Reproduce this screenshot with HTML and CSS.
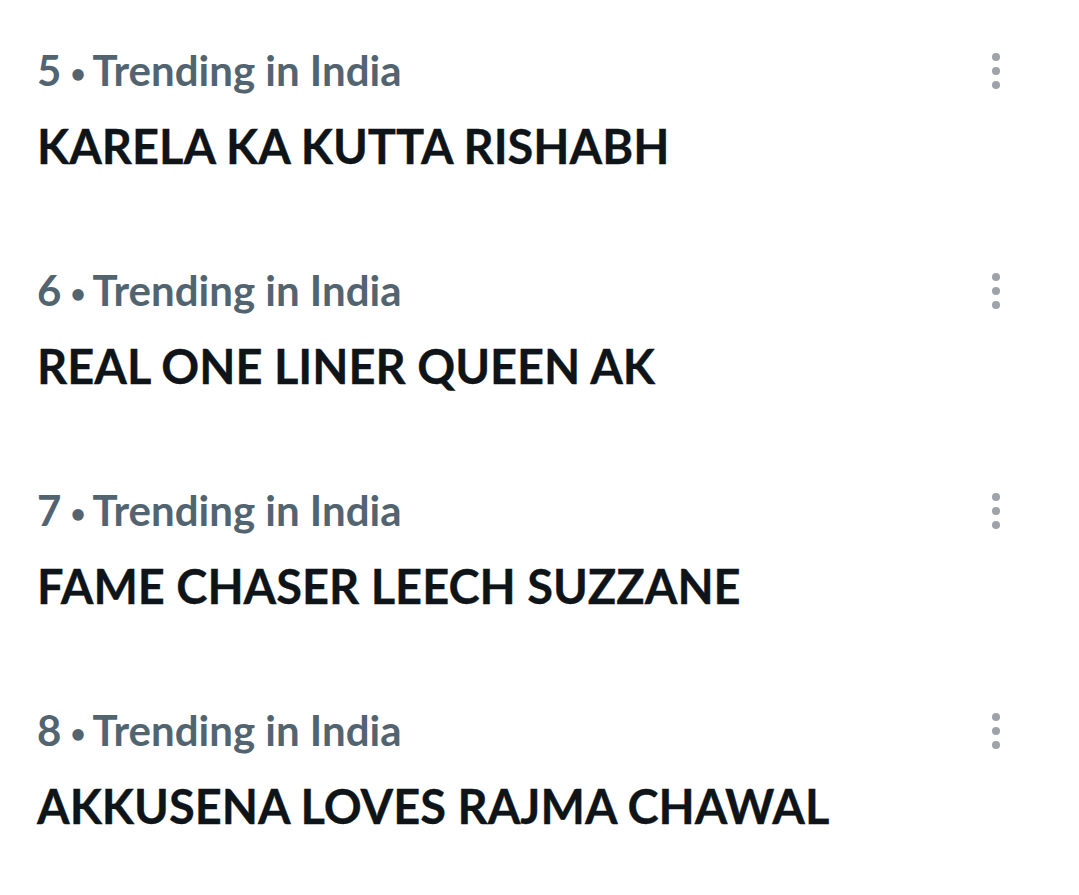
FILE: index.html
```html
<!DOCTYPE html>
<html lang="en">
<head>
<meta charset="utf-8">
<title>Trending</title>
<link rel="stylesheet" href="styles.css">
</head>
<body>
<main class="trends">
  <section class="trend">
    <div class="trend-text">
      <div class="trend-meta">5 <span class="sep">•</span> Trending in India</div>
      <div class="trend-title">KARELA KA KUTTA RISHABH</div>
    </div>
    <button class="trend-more" aria-label="More"><span></span><span></span><span></span></button>
  </section>
  <section class="trend">
    <div class="trend-text">
      <div class="trend-meta">6 <span class="sep">•</span> Trending in India</div>
      <div class="trend-title">REAL ONE LINER QUEEN AK</div>
    </div>
    <button class="trend-more" aria-label="More"><span></span><span></span><span></span></button>
  </section>
  <section class="trend">
    <div class="trend-text">
      <div class="trend-meta">7 <span class="sep">•</span> Trending in India</div>
      <div class="trend-title">FAME CHASER LEECH SUZZANE</div>
    </div>
    <button class="trend-more" aria-label="More"><span></span><span></span><span></span></button>
  </section>
  <section class="trend">
    <div class="trend-text">
      <div class="trend-meta">8 <span class="sep">•</span> Trending in India</div>
      <div class="trend-title">AKKUSENA LOVES RAJMA CHAWAL</div>
    </div>
    <button class="trend-more" aria-label="More"><span></span><span></span><span></span></button>
  </section>
</main>
</body>
</html>
```
FILE: styles.css
```css
html, body {
  margin: 0;
  padding: 0;
  background: #ffffff;
}

body {
  font-family: Lato, "Open Sans", "Liberation Sans", sans-serif;
  -webkit-font-smoothing: antialiased;
}

.trends {
  display: flex;
  flex-direction: column;
}

.trend {
  height: 220px;
  box-sizing: border-box;
  padding: 45px 0 0 37px;
  display: flex;
  justify-content: space-between;
  align-items: flex-start;
}

.trend-text {
  display: flex;
  flex-direction: column;
  gap: 20px;
}

.trend-meta {
  font-size: 42px;
  line-height: 50px;
  font-weight: 700;
  color: #536471;
}

/* small bullet between rank and category */
.trend-meta .sep {
  font-size: 26px;
  vertical-align: 3px;
  margin: 0 -2px 0 -1px;
}

.trend-title {
  font-size: 47px;
  line-height: 56px;
  font-weight: 700;
  color: #0f1419;
  -webkit-text-stroke: 0.3px #0f1419;
}

.trend-more {
  margin: 8px 79px 0 0;
  padding: 0;
  border: 0;
  background: none;
  display: flex;
  flex-direction: column;
  gap: 6px;
}

.trend-more span {
  display: block;
  width: 8px;
  height: 8px;
  border-radius: 50%;
  background: #9da3a8;
}
```
